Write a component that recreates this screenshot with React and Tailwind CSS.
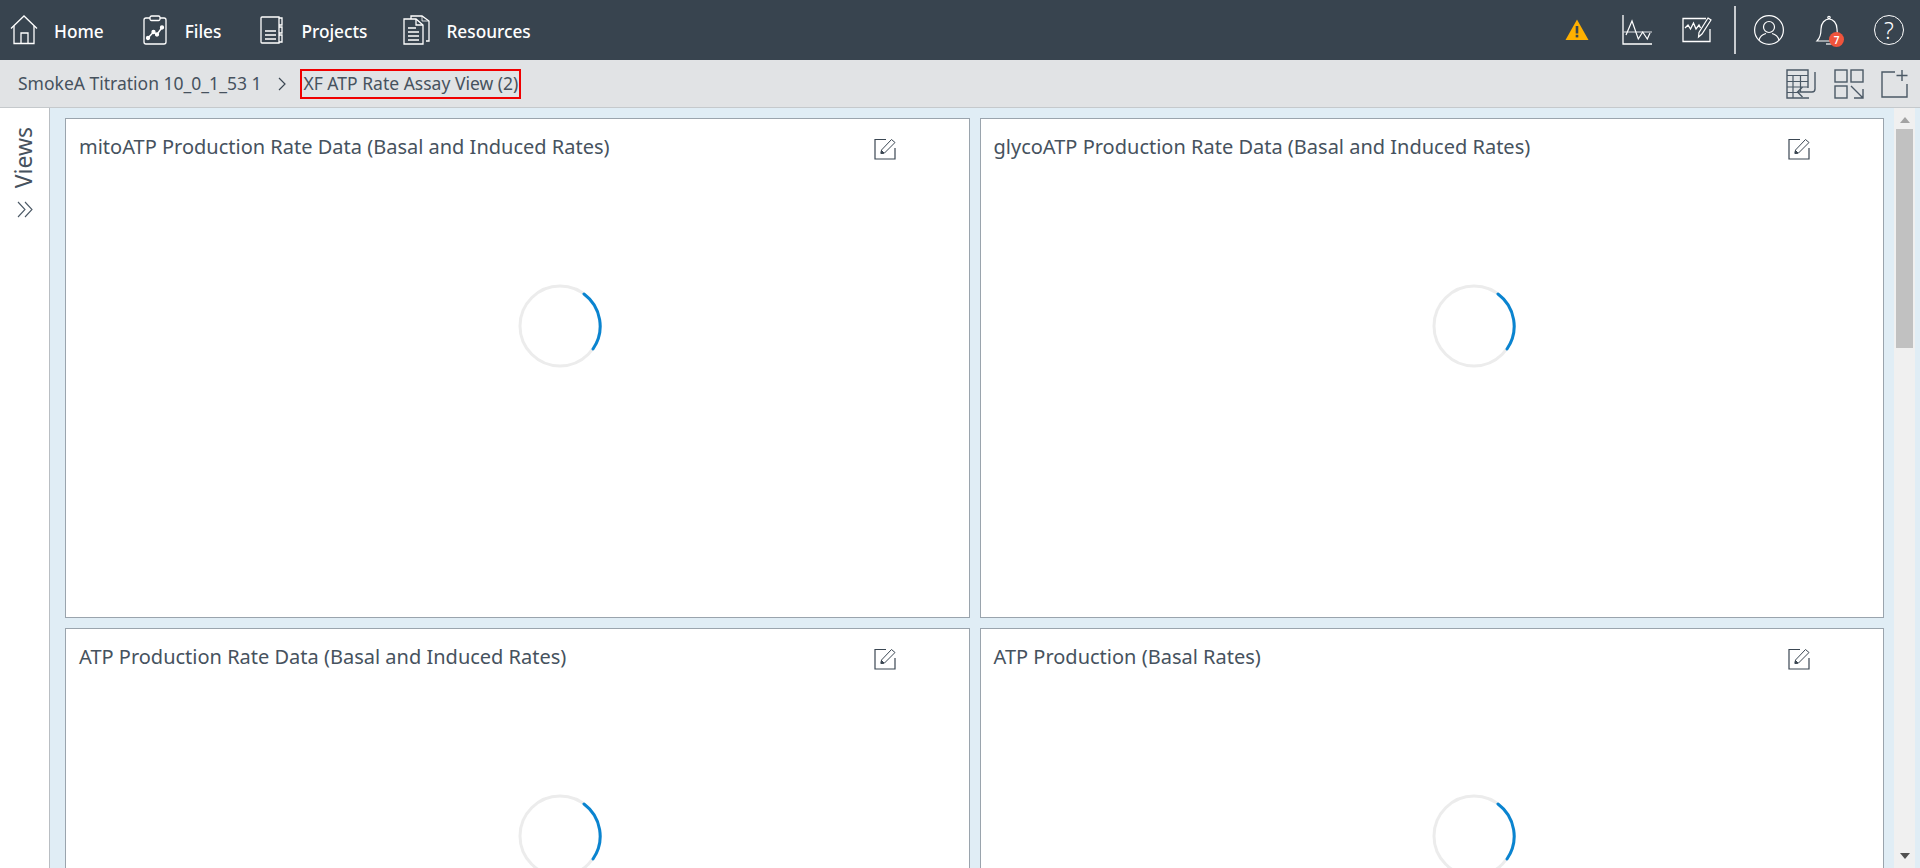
import React from 'react';

const font = { fontFamily: '"Noto Sans", sans-serif' };

function HomeIcon() {
  return (
    <svg width="28" height="30" viewBox="0 0 28 30" fill="none" stroke="#fff" strokeWidth="1.3">
      <path d="M1 13.5 14 1l13 12.5" />
      <path d="M4 11v17.5h20V11" />
      <path d="M11 28.5V18h7v10.5" />
    </svg>
  );
}

function FilesIcon() {
  return (
    <svg width="24" height="30" viewBox="0 0 24 30" fill="none" stroke="#fff" strokeWidth="1.3">
      <path d="M7 3H3a2 2 0 0 0-2 2v22a2 2 0 0 0 2 2h18a2 2 0 0 0 2-2V5a2 2 0 0 0-2-2h-4" />
      <rect x="7" y="1" width="10" height="4.5" rx="1.5" />
      <path d="M5 23l5.500-6 3.500 2.500 5-7" strokeWidth="1.5" />
      <circle cx="5" cy="23" r="1.500" fill="#fff" />
      <circle cx="10.500" cy="17" r="1.500" fill="#fff" />
      <circle cx="14" cy="19.500" r="1.500" fill="#fff" />
      <circle cx="19" cy="12.500" r="1.500" fill="#fff" />
    </svg>
  );
}

function ProjectsIcon() {
  return (
    <svg width="23" height="28" viewBox="0 0 23 28" fill="none" stroke="#fff" strokeWidth="1.3">
      <path d="M19 1H2a1 1 0 0 0-1 1v24a1 1 0 0 0 1 1h17z" />
      <path d="M19 2h3v7h-3M19 11h3v6h-3M19 19h3v7h-3" />
      <path d="M5 15h11M5 19h11M5 23h11" />
    </svg>
  );
}

function ResourcesIcon() {
  return (
    <svg width="27" height="30" viewBox="0 0 27 30" fill="none" stroke="#fff" strokeWidth="1.3">
      <path d="M8 4V1h11l7 5v20h-3" />
      <path d="M19 1v5h7" strokeWidth="0.8" />
      <path d="M1 4h12l7 6v19H1z" />
      <path d="M13 4v6h7" />
      <path d="M5 13h8M5 17h11M5 21h11M5 25h11" />
    </svg>
  );
}

function WarningIcon() {
  return (
    <svg width="24" height="22" viewBox="0 0 24 22">
      <path d="M12 0.500 23.500 21H0.500z" fill="#ffb000" />
      <rect x="10.700" y="7" width="2.600" height="7.500" fill="#38444f" />
      <rect x="10.700" y="15.800" width="2.600" height="2.600" fill="#38444f" />
    </svg>
  );
}

function ChartIcon() {
  return (
    <svg width="30" height="30" viewBox="0 0 30 30" fill="none" stroke="#fff">
      <path d="M1 0v29h29" strokeWidth="1.300" />
      <path d="M1 17h29" stroke="#c8ccd0" strokeWidth="1.200" />
      <path d="M4 20 10 6l6.300 18 4.400-7 4.600 7 2.700-6" strokeWidth="1.200" />
    </svg>
  );
}

function ChartEditIcon() {
  return (
    <svg width="30" height="26" viewBox="0 0 30 26" fill="none" stroke="#fff">
      <path d="M24 1.500H1v23h27V12" strokeWidth="1.300" />
      <path d="M3 11l3-3 2.500 4 3-6 2.500 6 3-4 1.500 3" strokeWidth="1.300" />
      <path d="M26 1l3 2-9 14-3.500 3 .5-4.500z" strokeWidth="1.200" />
    </svg>
  );
}

function UserIcon() {
  return (
    <svg width="30" height="30" viewBox="0 0 30 30" fill="none" stroke="#fff" strokeWidth="1.200">
      <circle cx="15" cy="15" r="14.400" />
      <circle cx="15" cy="12" r="5.500" />
      <path d="M5 25c1-4 5-6 7-6.500M25 25c-1-4-5-6-7-6.500" />
    </svg>
  );
}

function BellIcon() {
  return (
    <div className="relative h-[30px] w-[30px]">
      <svg width="30" height="30" viewBox="0 0 30 30" fill="none" stroke="#fff" strokeWidth="1.200">
        <path d="M2 26c3-3 4-6 4-12 0-6 4-10 8-10s8 4 8 10c0 6 1 9 4 12z" />
        <circle cx="14" cy="2.500" r="1.200" />
        <path d="M11 29h6" />
      </svg>
      <span className="absolute left-[14px] top-[17px] flex h-[15px] w-[15px] items-center justify-center rounded-full bg-[#f0543c] text-[10px] font-semibold leading-none text-white">
        7
      </span>
    </div>
  );
}

function HelpIcon() {
  return (
    <div className="relative flex h-[30px] w-[30px] items-center justify-center rounded-full border border-white text-[23px] font-light leading-none text-white">
      ?
    </div>
  );
}

function TableIcon() {
  return (
    <svg width="30" height="30" viewBox="0 0 30 30" fill="none" stroke="#4b5966" strokeWidth="1.200">
      <path d="M22 19V1H1v28h22" strokeWidth="1.400" />
      <path d="M1 6.500h21M1 12.500h21M1 18h21M1 23.500h12M7 6.500V29M14.500 6.500V23" />
      <path d="M29 3v17a3 3 0 0 1-3 3H12" strokeWidth="1.400" />
      <path d="M16.500 18 11.500 23l5 5" strokeWidth="1.400" />
    </svg>
  );
}

function GridArrowIcon() {
  return (
    <svg width="30" height="30" viewBox="0 0 30 30" fill="none" stroke="#4b5966" strokeWidth="1.400">
      <rect x="1" y="1" width="12" height="12" />
      <rect x="17" y="1" width="12" height="12" />
      <rect x="1" y="17" width="12" height="12" />
      <path d="M17 17 29 29M29 20v9h-9" />
    </svg>
  );
}

function AddPanelIcon() {
  return (
    <svg width="28" height="28" viewBox="0 0 28 28" fill="none" stroke="#4b5966" strokeWidth="1.400">
      <path d="M14 2H1v25h25V14" />
      <path d="M21 0v11M15.500 5.500h11" />
    </svg>
  );
}

function EditIcon() {
  return (
    <svg width="22" height="22" viewBox="0 0 22 22" fill="none" stroke="#3b4753">
      <path d="M12 1.500H1v19.500h20V10" strokeWidth="1.200" />
      <path d="M17.500 1.500 21 4.500 10.500 15 7 15.500l.5-3.500z" strokeWidth="1" />
      <path d="M7 15.500l.5-3 2.500 2.500z" fill="#3b4753" />
    </svg>
  );
}

function Spinner() {
  return (
    <svg width="84" height="84" viewBox="0 0 84 84" fill="none">
      <circle cx="42" cy="42" r="40" stroke="#ececec" strokeWidth="3" />
      <path d="M66 10A40 40 0 0 1 75 65" stroke="#0a84d0" strokeWidth="3" strokeLinecap="round" />
    </svg>
  );
}

function Card({ title }) {
  return (
    <div className="relative h-[500px] border border-[#9aa4ad] bg-white">
      <div className="flex items-start justify-between pl-[13px] pr-[73px] pt-[14px]">
        <span className="text-[20px] leading-[27px] text-[#46525e]">{title}</span>
        <div className="mt-[5px]">
          <EditIcon />
        </div>
      </div>
      <div className="flex justify-center pl-[85px] pt-[124px]">
        <Spinner />
      </div>
    </div>
  );
}

const navItems = [
  { label: 'Home', Icon: HomeIcon, ml: 'ml-[10px]', gap: 'gap-[16px]' },
  { label: 'Files', Icon: FilesIcon, ml: 'ml-[39px]', gap: 'gap-[18px]' },
  { label: 'Projects', Icon: ProjectsIcon, ml: 'ml-[39px]', gap: 'gap-[18px]' },
  { label: 'Resources', Icon: ResourcesIcon, ml: 'ml-[36px]', gap: 'gap-[16px]' }
];

const titles = [
  'mitoATP Production Rate Data (Basal and Induced Rates)',
  'glycoATP Production Rate Data (Basal and Induced Rates)',
  'ATP Production Rate Data (Basal and Induced Rates)',
  'ATP Production (Basal Rates)'
];

export default function App() {
  return (
    <div className="flex h-[868px] w-[1920px] flex-col overflow-hidden bg-white" style={font}>
      <header className="flex h-[60px] shrink-0 items-center bg-[#38444f] text-white">
        {navItems.map(({ label, Icon, ml, gap }) => (
          <div key={label} className={`flex items-center ${ml} ${gap}`}>
            <Icon />
            <span className="pt-[3px] text-[17.25px] font-medium">{label}</span>
          </div>
        ))}
        <div className="ml-auto flex items-center pr-[16px]">
          <WarningIcon />
          <div className="ml-[33px]">
            <ChartIcon />
          </div>
          <div className="ml-[30px]">
            <ChartEditIcon />
          </div>
          <div className="ml-[22px] h-[48px] w-[2px] bg-[#c8ccd0]" />
          <div className="ml-[18px]">
            <UserIcon />
          </div>
          <div className="ml-[31px]">
            <BellIcon />
          </div>
          <div className="ml-[29px]">
            <HelpIcon />
          </div>
        </div>
      </header>

      <div className="flex h-[48px] shrink-0 items-center border-b border-[#c5c9cc] bg-[#e1e3e5] pl-[18px] text-[17.5px] text-[#46525e]">
        <span>SmokeA Titration 10_0_1_53 1</span>
        <svg className="ml-[17px]" width="8" height="14" viewBox="0 0 8 14" fill="none" stroke="#3b4753" strokeWidth="1.200">
          <path d="M1 1l6 6-6 6" />
        </svg>
        <span className="ml-[14px] flex h-[30px] items-center border-2 border-[#f00000] pl-[1px] pr-[1px]">
          XF ATP Rate Assay View (2)
        </span>
        <div className="ml-auto flex items-center pr-[11px]">
          <TableIcon />
          <div className="ml-[18px]">
            <GridArrowIcon />
          </div>
          <div className="ml-[17px]">
            <AddPanelIcon />
          </div>
        </div>
      </div>

      <div className="flex min-h-0 flex-1">
        <aside className="flex w-[50px] shrink-0 flex-col items-center border-r border-[#b9bec3] bg-white pt-[19px]">
          <span className="mr-[2px] text-[23px] leading-none text-[#46525e] [transform:rotate(180deg)] [writing-mode:vertical-rl]">
            Views
          </span>
          <svg className="mt-[13px]" width="16" height="17" viewBox="0 0 16 17" fill="none" stroke="#4b5966" strokeWidth="1.100">
            <path d="M1 1l7 7.500-7 7.500M8 1l7 7.500-7 7.500" />
          </svg>
        </aside>
        <main className="flex min-w-0 flex-1 bg-[#e0edf5]">
          <div className="min-w-0 flex-1 overflow-hidden pl-[15px] pr-[10px] pt-[10px]">
            <div className="grid grid-cols-2 gap-[10px]">
              {titles.map((t) => (
                <Card key={t} title={t} />
              ))}
            </div>
          </div>
          <div className="mr-[5px] flex w-[21px] shrink-0 flex-col items-center bg-[#f0f0f0]">
            <svg className="mt-[9px]" width="10" height="6" viewBox="0 0 10 6">
              <path d="M5 0l5 6H0z" fill="#a3a3a3" />
            </svg>
            <div className="mt-[6px] h-[219px] w-[17px] bg-[#c1c1c1]" />
            <svg className="mb-[9px] mt-auto" width="10" height="6" viewBox="0 0 10 6">
              <path d="M5 6l5-6H0z" fill="#505050" />
            </svg>
          </div>
        </main>
      </div>
    </div>
  );
}
